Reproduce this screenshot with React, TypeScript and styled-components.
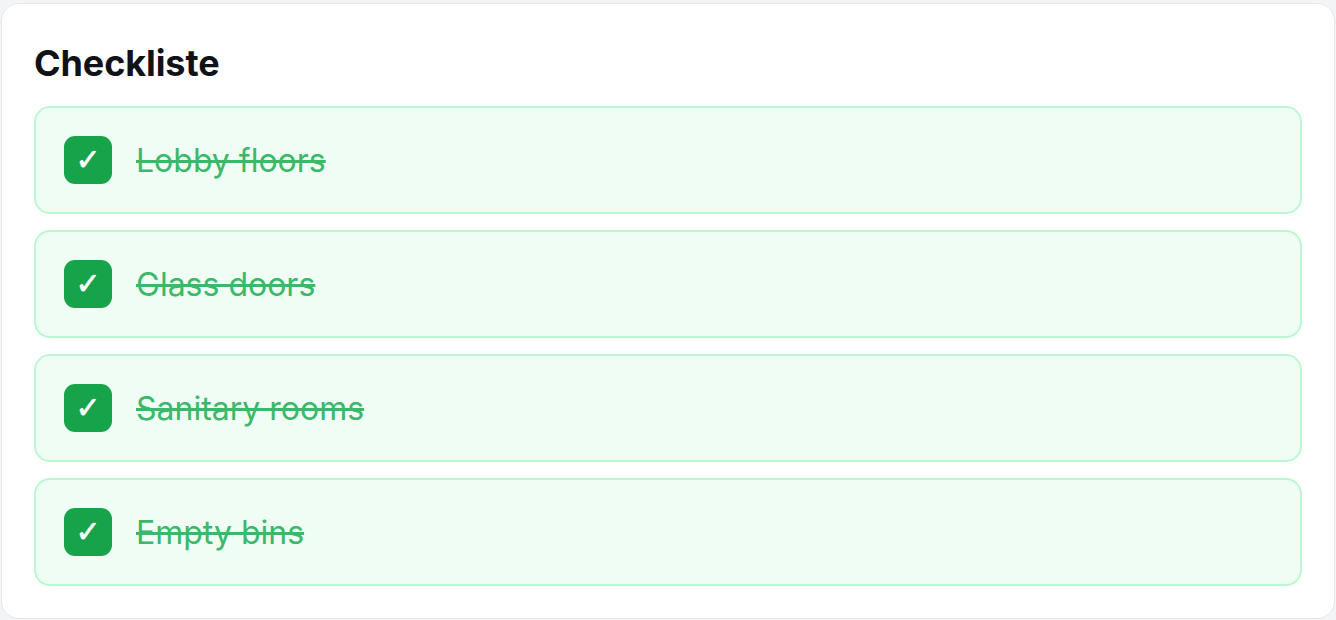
import * as React from 'react';
import styled, { createGlobalStyle } from 'styled-components';

const GlobalStyle = createGlobalStyle`
  html, body {
    margin: 0;
    padding: 0;
    background: #f3f4f6;
    font-family: Inter, "Liberation Sans", sans-serif;
  }
  * { box-sizing: border-box; }
`;

const Page = styled.div`
  padding: 3px 1px 1px 1px;
  height: 620px;
`;

const Card = styled.section`
  background: #ffffff;
  border: 1px solid #e5e7eb;
  border-radius: 18px;
  padding: 32px;
  height: 616px;
  display: flex;
  flex-direction: column;
`;

const Title = styled.h2`
  margin: 0 0 16px 0;
  font-size: 36px;
  line-height: 54px;
  font-weight: 700;
  color: #111218;
  letter-spacing: -0.1px;
`;

const List = styled.ul`
  list-style: none;
  margin: 0;
  padding: 0;
  display: flex;
  flex-direction: column;
  gap: 16px;
`;

const Row = styled.li<{ $done: boolean }>`
  display: flex;
  align-items: center;
  gap: 24px;
  padding: 28px;
  border: 2px solid ${p => (p.$done ? '#bbf7d0' : '#e5e7eb')};
  background: ${p => (p.$done ? '#f0fdf4' : '#ffffff')};
  border-radius: 16px;
`;

const Box = styled.span<{ $done: boolean }>`
  width: 48px;
  height: 48px;
  flex: none;
  border-radius: 11px;
  background: ${p => (p.$done ? '#16a34a' : '#ffffff')};
  color: #ffffff;
  display: flex;
  align-items: center;
  justify-content: center;
  font-size: 30px;
  font-weight: 700;
  line-height: 1;
  font-family: "DejaVu Sans", sans-serif;
  -webkit-text-stroke: 0.6px #ffffff;
`;

const Label = styled.span<{ $done: boolean }>`
  font-size: 32px;
  line-height: 40px;
  padding-top: 2px;
  color: ${p => (p.$done ? '#3cb86a' : '#111218')};
  text-decoration: ${p => (p.$done ? 'line-through' : 'none')};
`;

const items = [
  { label: 'Lobby floors', done: true },
  { label: 'Glass doors', done: true },
  { label: 'Sanitary rooms', done: true },
  { label: 'Empty bins', done: true },
];

export default function App() {
  return (
    <>
      <GlobalStyle />
      <Page>
        <Card>
          <Title>Checkliste</Title>
          <List>
            {items.map(item => (
              <Row key={item.label} $done={item.done}>
                <Box $done={item.done}>{item.done ? '✓' : ''}</Box>
                <Label $done={item.done}>{item.label}</Label>
              </Row>
            ))}
          </List>
        </Card>
      </Page>
    </>
  );
}
